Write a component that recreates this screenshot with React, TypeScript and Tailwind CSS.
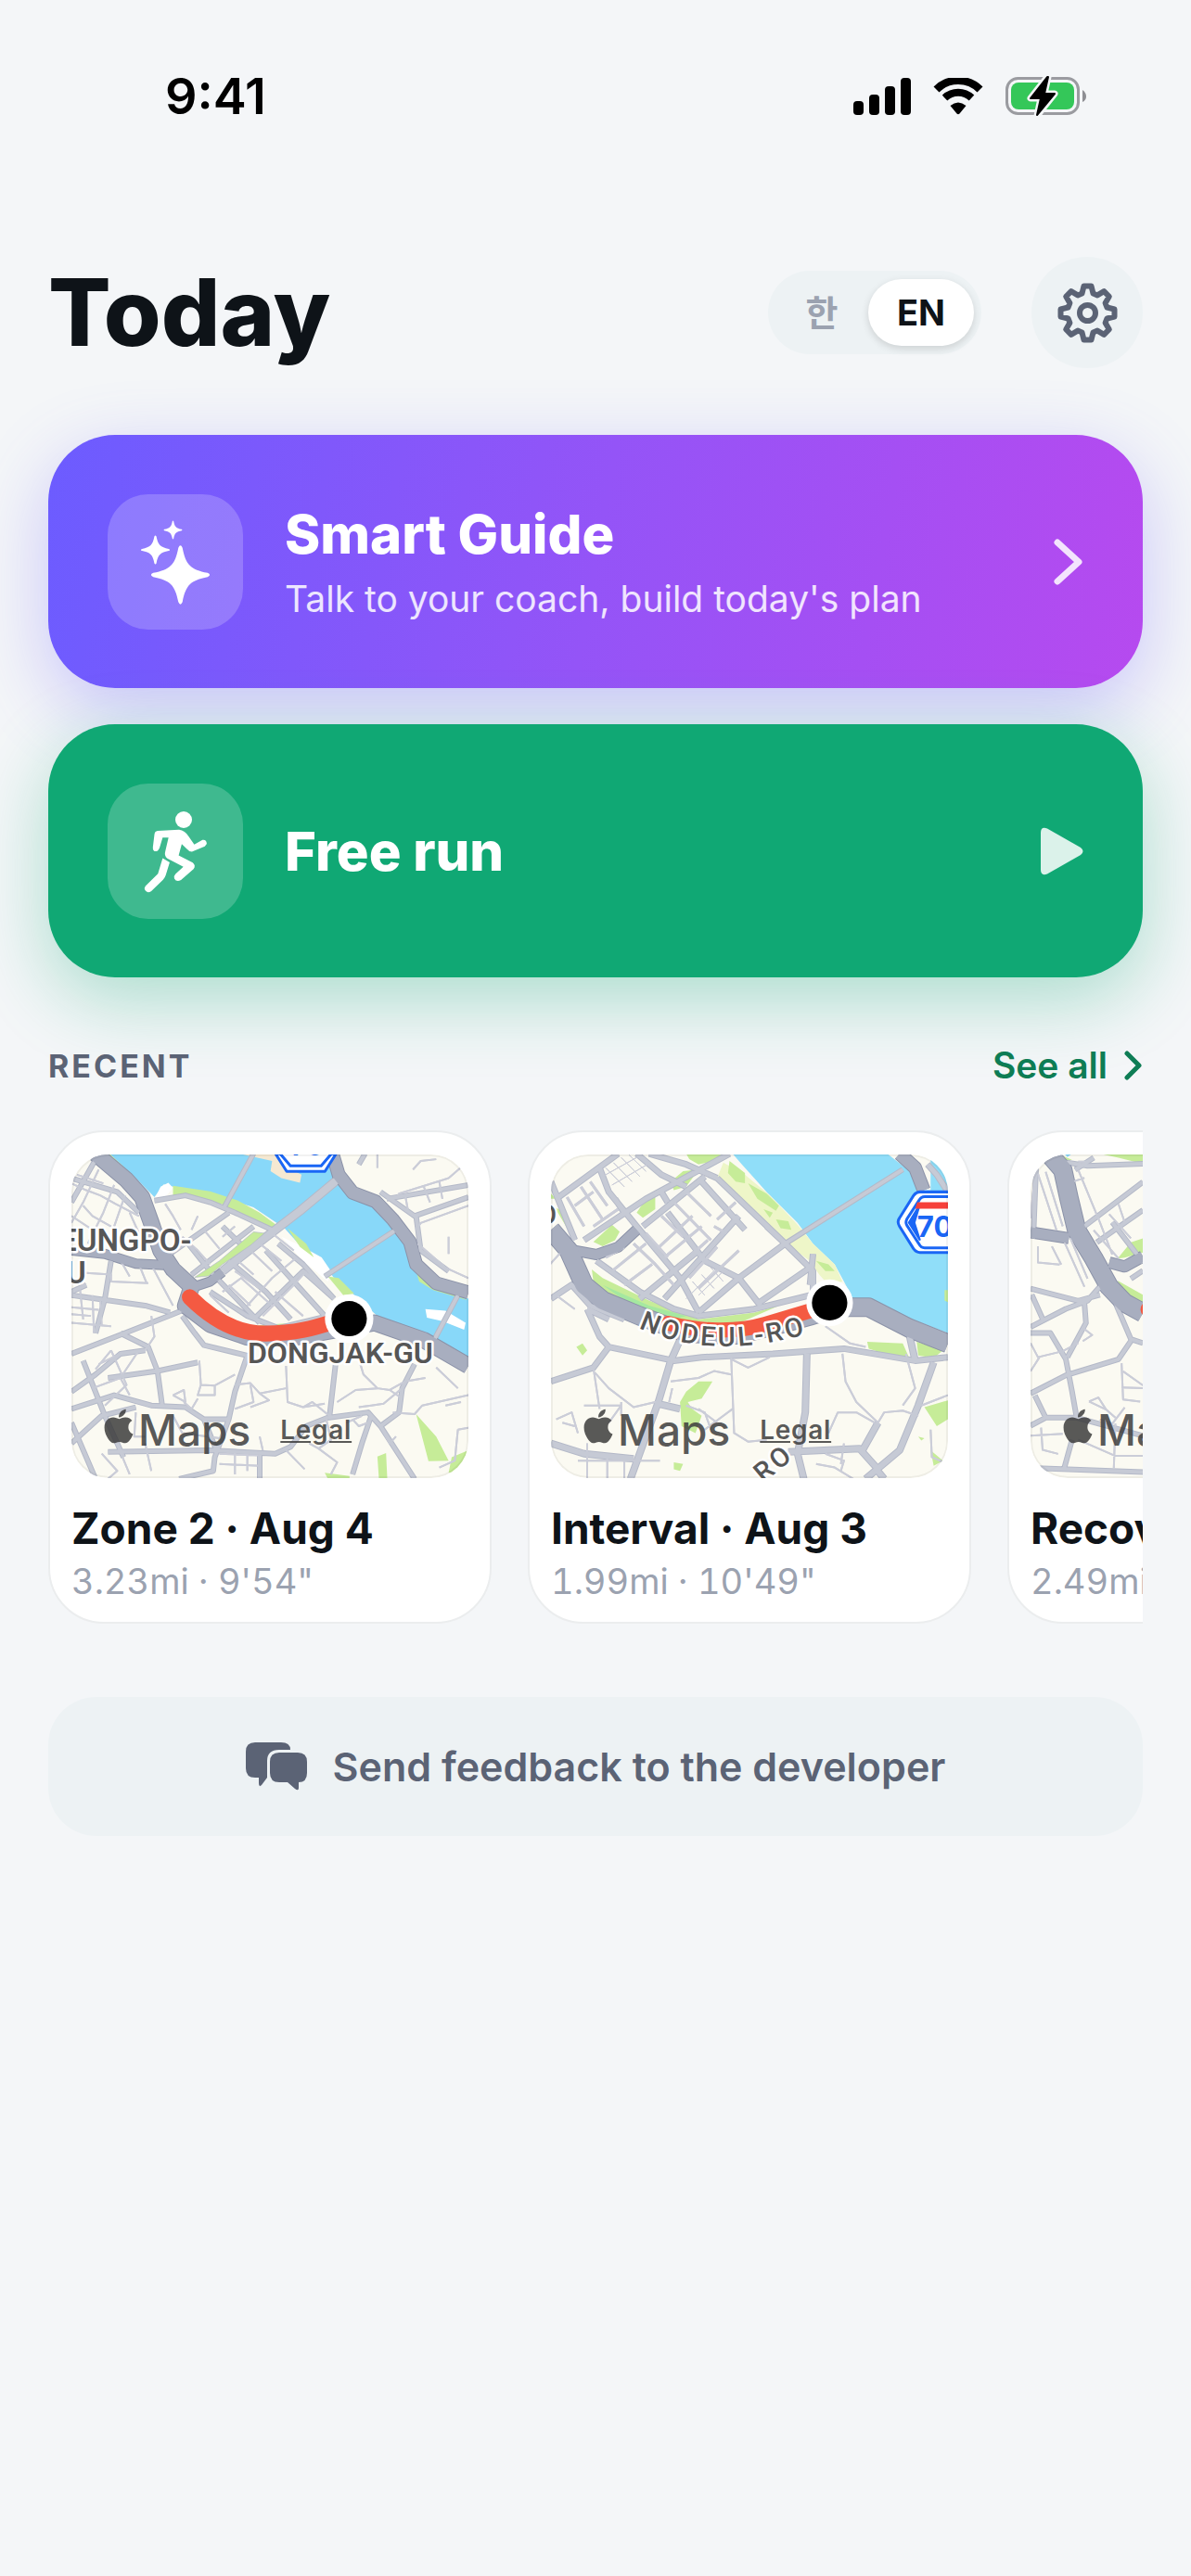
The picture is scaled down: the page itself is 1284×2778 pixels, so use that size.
import type { ReactNode } from "react"
import { FaApple } from "react-icons/fa"

const LAND = "#fbfaf2"
const WATER = "#88d8f9"
const GREEN = "#c6ec98"

type Road = { d: string; w: number; kind?: "minor" | "major" | "highway" }

const roadColor = { minor: "#cbcdd8", major: "#c6cad5", highway: "#a8aebf" }
const casingColor = { minor: "#cbcdd8", major: "#b4b9c8", highway: "#8b92a8" }

/* Gear outline: eight teeth around a 65px box */
const gearPath = (() => {
  const pts: string[] = []
  for (let i = 0; i < 8; i++) {
    const a = (i * Math.PI) / 4
    for (const [x, y] of [[-6, -21], [-4, -29], [4, -29], [6, -21]]) {
      const px = 32.5 + x * Math.cos(a) - y * Math.sin(a)
      const py = 32.5 + x * Math.sin(a) + y * Math.cos(a)
      pts.push(`${px.toFixed(1)} ${py.toFixed(1)}`)
    }
  }
  return `M${pts.join("L")}Z`
})()

const star =
  "M-.07-.93Q0-1.08.07-.93C.18-.35.35-.18.93-.07Q1.08 0 .93.07C.35.18.18.35.07.93Q0 1.08-.07.93C-.18.35-.35.18-.93.07Q-1.08 0-.93-.07C-.35-.18-.18-.35-.07-.93Z"

function Roads({ items }: { items: Road[] }) {
  return (
    <g fill="none" strokeLinejoin="round" strokeLinecap="butt">
      {items.map((r) => (
        <path key={"c" + r.d} d={r.d} stroke={casingColor[r.kind ?? "minor"]} strokeWidth={r.w + (r.kind ? 1 : 0)} vectorEffect="non-scaling-stroke" />
      ))}
      {items.map((r) => (
        <path key={r.d} d={r.d} stroke={roadColor[r.kind ?? "minor"]} strokeWidth={r.kind ? r.w - 1 : r.w} vectorEffect="non-scaling-stroke" />
      ))}
    </g>
  )
}

const label = {
  fontFamily: "Roboto, Inter, sans-serif",
  fontWeight: 600,
  fill: "#565656",
  stroke: "#ffffff",
  strokeWidth: 5,
  strokeLinejoin: "round",
  paintOrder: "stroke",
} as const

const zoneRoads: Road[] = [
  { w: 2, d: "M112 205L160 225L205 240L255 265L330 300M130 180L215 205M150 270L180 300L240 330M112 300L180 340M200 165L150 260L112 320M250 210L215 290L165 380M285 240L250 330M300 290L330 350" },
  { w: 2, d: "M160 465L240 470L240 490L360 495M265 420L300 475M330 440L355 495M375 450L440 560M112 490L160 500M140 515L150 600M180 530L185 640M205 540L210 620M112 565L200 572M112 610L240 620M112 585L175 590" },
  { w: 2, d: "M370 590L380 650L350 690L270 700L200 730M330 690L270 770L300 820M190 745L240 690M240 690L290 790L220 850M270 770L180 800M440 820L475 805L480 840L440 820M475 840L500 860L520 830M525 720L530 790L575 792L640 760M530 790L520 820L575 820L575 792M640 790L690 785L720 815L805 800M690 790L700 840L640 860M720 815L750 835L690 855" },
  { w: 2, d: "M805 735L810 840L860 855L890 840L945 880M860 855L930 845M1045 730L1055 760L1100 800L1140 805M970 840L1030 805L1100 800M1140 805L1190 780L1255 770M1140 805L1180 830M1040 855L1080 850L1120 845L1180 800M1150 870L1220 875L1245 850L1394 820M1320 850L1370 840M1290 740L1360 800M1110 910L1140 960L1160 940" },
  { w: 2, d: "M590 990L720 995M590 1020L720 1025M640 985L640 1050M680 990L680 1040M800 975L865 1035M935 890L950 950L910 975L880 960M910 975L970 1015L950 1050M1020 890L1040 910L1070 900M1000 900L1050 880M720 940L730 980M210 990L260 1040L230 1063M270 985L300 1050M350 960L370 1040M320 870L315 940L350 940M440 880L470 930L590 945M1360 920L1350 1010L1300 1030M1360 920L1394 915" },
  { w: 2, d: "M465 340L440 300L415 265M470 360L520 400L560 440M540 340L590 395M520 300L500 340M600 360L640 330M560 530L620 580M620 500L690 560M640 460L720 510M600 520L660 480L760 560M650 430L700 470M690 400L760 460M720 380L790 430M760 350L830 400M680 560L760 480L840 420M730 590L830 500L870 460M770 520L860 590" },
  { w: 2, d: "M1100 120L1100 160M1215 165L1240 140L1290 135M1160 250L1170 235L1330 190M1250 215L1270 260M1300 200L1310 250M1200 290L1190 240M1330 190L1394 140M1225 340L1240 320L1394 270M1230 380L1320 450L1394 480M1330 360L1330 410" },
  { w: 5, kind: "major", d: "M112 700L270 645L440 585L480 570M112 530L350 560L430 580M240 430L220 540L190 640M160 500L112 520M150 720L220 880L280 1000M112 810L190 760L270 700L350 690" },
  { w: 5, kind: "major", d: "M270 640L360 680L390 750L405 850M230 770L390 750L520 725M112 860L250 820L370 850L480 855L540 890L620 890M112 960L210 880L320 855M112 900L190 1063M470 590L510 640L540 675L680 705" },
  { w: 5, kind: "major", d: "M680 705L640 810L620 890L575 1000L570 1040L460 1063M230 985L560 980L770 990L820 970L870 910L940 885M965 730L945 885L1070 870L1110 910L1220 1063M1110 910L1170 870L1180 800L1220 730M1080 880L1050 960L1020 1050M540 890L580 980M720 990L720 1063" },
  { w: 5, kind: "major", d: "M380 255L480 240L560 260L640 290L760 340M430 410L620 290M500 470L700 330M480 370L560 460L720 610M600 330L680 400M620 430L740 520L820 600M740 400L860 520L940 600M700 600L860 460L960 540M780 380L860 440L960 540M560 520L680 590L780 625L940 590" },
  { w: 5, kind: "major", d: "M200 120L112 260M112 190L260 230L330 290M1110 230L1220 300L1394 245M1130 250L1394 210M1225 300L1240 400L1330 460M1040 150L1060 119" },
  { w: 5, kind: "major", d: "M605 275L700 119M930 475L1160 340M1280 665L1360 530" },
  { w: 9, kind: "major", d: "M600 460L720 375L850 285L970 195" },
  { w: 10, kind: "highway", d: "M112 400L220 410L320 438L410 442M510 505L560 490L600 462" },
  { w: 14, kind: "highway", d: "M955 119L975 180L1020 232L1095 258L1150 310L1205 375L1225 440L1290 495L1394 522" },
  { w: 17, kind: "highway", d: "M190 119L290 195L340 245L370 320L400 400L440 455L500 505L480 560L560 615L680 652L820 655L940 635L1090 610L1250 660L1394 735" },
]

function ZoneMap() {
  return (
    <>
      <g transform="scale(.3323 .3697) translate(-112 -119)">
        <path fill={WATER} d="M235 119L320 190L380 245L410 208L440 215L600 245L700 275L800 335L850 385L920 430L960 480L1020 525L1100 590L1394 715V540L1290 510L1230 460L1200 400L1180 340L1120 280L1030 250L980 190L955 119Z" />
        <path fill="#fff" d="M378 255L400 215L425 203L440 218L420 240ZM850 385L920 420L950 460L940 490L860 430L790 360Z" />
        <path fill="#f5e9d2" d="M655 119H770L800 155L855 180L850 203L790 190L755 170L760 140Z" />
        <path fill="#fff" d="M1255 570L1320 575L1385 610L1380 630L1310 605L1260 595Z" />
        <path fill={GREEN} d="M215 119H235L315 185V200ZM440 212L560 228L650 255L720 290L780 330L750 338L620 285L600 266L440 240ZM810 335L870 380L895 420L850 390ZM940 475L975 480L1025 525L990 530ZM1225 460L1270 490L1330 520L1394 545L1280 515L1235 490ZM1225 875L1290 940L1330 1010L1265 1012ZM1100 998L1128 988L1132 1063H1105ZM930 1045L1010 1055V1063H940ZM1394 980L1340 1000L1330 1045L1394 1040ZM560 570L680 620L860 608L680 632Z" />
        <Roads items={zoneRoads} />
        <path fill={GREEN} stroke="#b4b9c8" strokeWidth="2" d="M510 478L555 474L600 440L690 385L735 350L700 346L590 430Z" />
      </g>
      <path d="M219 0L231 19H272L284 0Z" fill="#fff" stroke="#1a66f5" strokeWidth="3" strokeLinejoin="round" />
      <path d="M224 0L235 13H268L279 0" fill="#fff" stroke="#1a66f5" strokeWidth="3" />
      <text x="236" y="2" fontSize="28" fontWeight="700" fill="#1a66f5" fontFamily="Inter, sans-serif">70</text>
      <path d="M127 154C147 174 175 193 208 193S260 187 282 180" fill="none" stroke="#f45a42" strokeWidth="17" strokeLinecap="round" />
      <circle cx="298" cy="177" r="26" fill="#fff" />
      <circle cx="298" cy="177" r="19" />
      <text {...label} x="-13" y="104" fontSize="33">EUNGPO-</text>
      <text {...label} x="-6" y="139" fontSize="33">U</text>
      <text {...label} x="189" y="225" fontSize="32">DONGJAK-GU</text>
    </>
  )
}

const intervalRoads: Road[] = [
  { w: 1, d: "M340 160L400 215M365 145L425 200M390 130L450 185M415 122L470 170M330 185L450 125M360 210L475 150M600 540L700 450M640 530L720 460M620 490L660 530M650 470L690 510M680 450L720 490" },
  { w: 3, d: "M215 245L270 330M260 215L330 310M290 200L345 270M240 270L300 230M300 330L380 280M340 420L400 390M360 460L470 380M400 500L490 440M430 380L500 440L560 500M470 350L540 420M520 300L590 360M560 260L680 370M600 230L680 300M500 400L620 300M530 420L650 330M570 450L670 370M610 480L700 390M640 510L770 400M700 310L760 260M690 330L730 350" },
  { w: 2, d: "M200 400L160 440M180 530L240 570M300 740L320 860M305 755L350 800L430 855L510 838M270 850L390 850L350 900M180 890L230 870L250 930M200 900L240 910M390 840L390 880M550 780L640 770L690 750L745 760M555 800L545 840M600 850L660 870L680 920M660 920L750 860M640 860L700 900" },
  { w: 2, d: "M745 700L755 930L800 955L860 950M745 715L800 740L870 710M1105 700L1115 780L1150 840L1220 900L1240 870L1300 865L1350 880M1060 930L1090 870L1150 870L1210 900M1050 620L1130 670L1180 680M1310 700L1340 800L1300 850M1390 920L1394 1000L1446 1020M1020 1020L1080 1030L1140 1063M1050 990L1110 1010L1100 1040M1110 960L1100 1020M1360 850L1446 820M280 960L280 1063M345 1000V1063M400 1000V1063M250 1010L515 1010" },
  { w: 6, kind: "major", d: "M163 200L240 370M180 250L380 119M270 370L470 250L740 119M320 160L350 230L440 330L580 480L640 580M440 119L520 180L600 215M480 119L600 150L700 190M370 250L400 290M460 330L660 185M520 230L540 260M540 290L660 430L770 480M640 190L700 250L790 340M700 190L920 380L1010 460L1010 520M530 540L770 300M640 580L770 480L920 380M830 555L1000 450M770 480L840 560M920 380L860 330" },
  { w: 6, kind: "major", d: "M310 430L450 520L560 570L640 590L820 570L1000 530M1010 410L1000 500M450 540L640 400M280 570L320 650L350 680L560 720L650 710L880 700L1110 685L1340 720L1446 710M350 680L300 740L163 780M350 600L280 570" },
  { w: 7, kind: "major", d: "M590 640L550 720L510 840L420 1063M990 700L985 870L960 990L980 1063M510 845L580 860M1400 725L1350 850L1290 980L1180 1063M1210 1030L1240 1063M930 985L1160 975L1215 1030M163 960L270 990L430 1005M1220 900L1170 980M1320 640L1340 720" },
  { w: 5, kind: "major", d: "M920 380L1300 165" },
  { w: 6, kind: "major", d: "M163 540L230 500L290 560L400 600M1380 150L1410 180L1446 230" },
  { w: 11, kind: "highway", d: "M240 400L310 412L380 390L440 340" },
  { w: 14, kind: "highway", d: "M1290 119L1340 160L1368 225" },
  { w: 20, kind: "highway", d: "M163 340L220 400L270 500L330 545L450 590L600 640L760 645L880 620L1000 590L1090 565L1190 565L1320 625L1446 670" },
]

function IntervalMap() {
  return (
    <>
      <g transform="scale(.332 .3697) translate(-163 -119)">
        <path fill="#90def9" d="M750 119L780 150L860 230L960 320L1010 380L1080 440L1110 490L1150 560L1190 550L1446 640V119H1390L1390 225H1345L1330 175L1250 119Z" />
        <path fill="#eef6c8" d="M720 145L790 180L870 240L960 325L1010 380L1080 440L1105 490L1060 500L1030 470L1000 430L930 385L830 290L700 190Z" />
        <path fill={GREEN} d="M163 235L180 250L163 250ZM175 275L200 285L245 360L215 335ZM600 119H715L690 140L640 150L610 135ZM740 140L790 175L790 205L760 200L735 175ZM800 205L860 235L900 270L890 285L830 250ZM890 310L930 315L940 340L905 335ZM850 280L880 290L870 305ZM300 375L360 325L385 345L370 370L330 388ZM440 290L470 250L500 245L500 280L460 305ZM550 200L590 170L640 165L600 215L560 225ZM295 455L330 480L480 545L640 600L820 580L900 560L760 615L620 605L480 590L340 530L300 490ZM1020 430L1060 440L1080 460L1050 460ZM1185 665L1300 670L1320 710L1260 705L1190 685ZM1345 665L1430 690L1400 712L1350 705ZM600 810L640 780L685 780L650 830L605 840L620 860L650 880L630 930L585 910L580 840ZM245 680L265 670L280 690L265 705ZM1370 855L1446 835V890L1410 910ZM1390 980L1430 1010L1400 1025ZM560 1015L590 1020L580 1040L560 1035ZM1350 940L1370 945L1360 952ZM1435 515H1446V550L1435 545Z" />
        <path fill="#a5e8a0" d="M330 500L480 560L600 590L560 600L440 570Z" />
        <Roads items={intervalRoads} />
      </g>
      <path d="M440 41H396Q392 41 389 45L374 69Q371 73 374 78L389 102Q392 106 396 106H440Z" fill="#fff" stroke="#1a66f5" strokeWidth="3" />
      <path d="M440 46H401Q397 46 395 50L382 70Q380 74 382 77L395 97Q397 101 401 101H440" fill="#fff" stroke="#1a66f5" strokeWidth="3" />
      <path d="M396 54L384 74L396 93L390 74Z" fill="#1a66f5" stroke="#1a66f5" strokeWidth="2" />
      <path d="M393 52H430V59H391Z" fill="#f6403a" />
      <text x="393" y="89" fontSize="31" fontWeight="700" fill="#1a66f5" fontFamily="Inter, sans-serif">70</text>
      <path d="M126 182C160 191 200 192 230 183L280 168" fill="none" stroke="#f45a42" strokeWidth="16" strokeLinecap="round" />
      <circle cx="299" cy="160" r="25" fill="#fff" />
      <circle cx="299" cy="160" r="19" />
      <path id="nodeul-ro" d="M94 187Q178 226 292 188" fill="none" />
      <text {...label} fontSize="29" fontWeight={500} letterSpacing="3">
        <textPath href="#nodeul-ro">NODEUL-RO</textPath>
      </text>
      <text {...label} fontSize="29" fontWeight={500} letterSpacing="3" transform="translate(228 354) rotate(-40)">RO</text>
      <text {...label} fontSize="29" fontWeight={500} x="-14" y="75">O</text>
    </>
  )
}

const recoveryRoads: Road[] = [
  { w: 2, d: "M216 490L230 380L250 350M240 380L300 520M265 375L320 510M240 560V600L310 605M285 560L315 605M320 540L390 660M345 540L400 640M370 370L440 500L480 580M390 390L350 400M370 350L400 350" },
  { w: 2, d: "M216 800L240 835L320 820L370 800M216 870L245 835M390 765L415 780L385 795M510 850L515 940L570 945M515 870L579 905M510 910L579 912M405 945L435 935L460 965L405 945M460 965L490 985M440 990L480 1000L520 960M250 1010L255 1065L305 1075M216 1030L320 1025M370 1040L490 1080L579 1080M490 1000L485 1110M470 480L540 540M500 455L520 500M420 520L500 590" },
  { w: 5, kind: "major", d: "M216 665L370 695L440 680M216 760L330 715L400 695L440 660L490 700L540 790L579 800M220 680L255 740M216 775L280 775L330 840L350 920L365 985M335 835L395 750L390 700M216 925L330 880L500 840L540 795M230 930L265 985M216 1005L265 985L365 985M365 985L579 1030M350 1040L325 1110M216 1110L579 1120M320 350L400 360L579 355" },
  { w: 5, kind: "major", d: "M390 510L579 400M430 550L579 470M480 500L560 580L579 600M360 370L420 340M235 345L225 540M540 640L579 620" },
  { w: 12, kind: "highway", d: "M216 525L340 540M470 600L520 610L579 585" },
  { w: 20, kind: "highway", d: "M275 330L320 370L340 440L365 520L420 590L470 660L520 700L579 725" },
]

function RecoveryMap() {
  return (
    <>
      <g transform="scale(.3323 .4325) translate(-216 -330)">
        <path fill={GREEN} d="M440 330H579V355L500 340ZM345 400L355 400V420ZM497 590L540 550L579 540V575L520 588ZM497 645L579 680V705L510 665ZM318 335L350 345L330 348Z" />
        <path fill={WATER} d="M325 330H350L335 338Z" />
        <Roads items={recoveryRoads} />
      </g>
      <path d="M126 167C150 187 180 193 210 193" fill="none" stroke="#f45a42" strokeWidth="16" strokeLinecap="round" />
    </>
  )
}

const runs: { title: string; stats: string; map: ReactNode }[] = [
  { title: "Zone 2 · Aug 4", stats: "3.23mi · 9'54\"", map: <ZoneMap /> },
  { title: "Interval · Aug 3", stats: "1.99mi · 10'49\"", map: <IntervalMap /> },
  { title: "Recovery", stats: "2.49mi", map: <RecoveryMap /> },
]

function StatusBar() {
  return (
    <div className="flex h-[207px] items-center justify-between pl-[178px] pr-[112px]">
      <span className="text-[54px] font-semibold text-black">9:41</span>
      <div className="flex items-center gap-6">
        <svg className="h-[40px] w-[62px]" viewBox="0 0 62 40">
          <rect x="0" y="25" width="11" height="15" rx="4" />
          <rect x="17" y="18" width="11" height="22" rx="4" />
          <rect x="34" y="9" width="11" height="31" rx="4" />
          <rect x="51" y="0" width="11" height="40" rx="4" />
        </svg>
        <svg className="h-[40px] w-[54px]" viewBox="0 0 54 40">
          <path d="M3.500 12.500A33.500 33.500 0 0 1 50.500 12.500" fill="none" stroke="#000" strokeWidth="8.500" />
          <path d="M12.500 21.500A21 21 0 0 1 41.500 21.500" fill="none" stroke="#000" strokeWidth="8" />
          <path d="M18.500 30Q27 23 35.500 30L28.500 38.500Q27 40 25.500 38.500Z" />
        </svg>
        <svg className="h-[44px] w-[88px]" viewBox="0 0 88 44">
          <rect x="1.500" y="2.500" width="77" height="38" rx="12" fill="none" stroke="#9a9ba0" strokeWidth="3" />
          <path d="M83 15Q87 18 87 22T83 28Z" fill="#8e8f94" />
          <rect x="6" y="7" width="68" height="29" rx="8" fill="#34c759" />
          <path d="M45 1L27 24H38L34 43L53 19H42L46 1Z" stroke="#f4f6f8" strokeWidth="7" strokeLinejoin="round" />
          <path d="M45 1L27 24H38L34 42L53 19H42L46 1Z" stroke="#000" strokeWidth="2" strokeLinejoin="round" />
        </svg>
      </div>
    </div>
  )
}

function Header() {
  return (
    <header className="flex h-[120px] items-center justify-between">
      <h1 className="text-[100px] font-extrabold leading-none text-[#0e1318]">Today</h1>
      <div className="flex items-center gap-[54px]">
        <div className="flex h-[90px] items-center rounded-full bg-[#edf2f4] p-2">
          <button className="h-[72px] w-[100px] rounded-full text-[38px] font-bold text-[#9ba2b0]">한</button>
          <button className="h-[72px] w-[114px] rounded-full bg-white text-[38px] font-bold text-[#0e1318] shadow-[0_3px_9px_rgba(0,0,0,0.14)]">EN</button>
        </div>
        <button aria-label="Settings" className="flex size-[120px] items-center justify-center rounded-full bg-[#edf2f4]">
          <svg className="size-[65px]" viewBox="0 0 65 65" fill="none" stroke="#5b6375" strokeWidth="6" strokeLinejoin="round">
            <path d={gearPath} />
            <circle cx="32.500" cy="32.500" r="8.500" />
          </svg>
        </button>
      </div>
    </header>
  )
}

function RunCard({ title, stats, map }: { title: string; stats: string; map: ReactNode }) {
  return (
    <article className="w-[478px] shrink-0 rounded-[60px] border-2 border-[#ebedee] bg-white px-[23px] pb-5 pt-6">
      <div className="relative h-[349px] overflow-hidden rounded-[40px]">
        <svg className="size-full" viewBox="0 0 426 349" preserveAspectRatio="xMidYMid slice">
          <rect width="426" height="349" fill={LAND} />
          {map}
        </svg>
        <div className="absolute inset-0 rounded-[40px] border-2 border-black/5" />
        <div className="absolute bottom-6 left-[34px] flex items-center text-[#3c3c3c]/85">
          <FaApple className="mr-1 h-[42px] w-[34px] -translate-y-1" />
          <span className="text-[46px] font-medium leading-[56px]">Maps</span>
          <a href="#legal" className="ml-8 text-[28px] font-semibold leading-[56px] tracking-wide underline">Legal</a>
        </div>
      </div>
      <h3 className="mt-[26px] whitespace-nowrap text-[46px] font-bold leading-[56px] text-[#0e1318]">{title}</h3>
      <p className="mt-[5px] whitespace-nowrap text-[38px] leading-[48px] tabular-nums text-[#9ba2b0]">{stats}</p>
    </article>
  )
}

export default function App() {
  return (
    <div className="min-h-screen overflow-hidden bg-[#f4f6f8] font-[Inter,'Noto_Sans_CJK_KR',sans-serif]">
      <StatusBar />
      <main className="px-[52px] pt-[70px]">
        <Header />

        {/* Start actions */}
        <div className="mt-[72px] flex flex-col gap-[39px]">
          <button className="flex h-[273px] items-center rounded-[72px] bg-linear-[100deg,#6c5cff,#9454f7_50%,#b64aef] px-16 text-left text-white shadow-[0_24px_80px_rgba(108,92,255,0.32)]">
            <svg className="size-[146px] rounded-[44px] bg-white/20" viewBox="0 0 146 146" fill="#fff">
              <path d={star} transform="translate(78.500 87) scale(31.500)" />
              <path d={star} transform="translate(51.500 60) scale(15.500)" />
              <path d={star} transform="translate(70.500 38.500) scale(10)" />
            </svg>
            <span className="ml-[45px] flex flex-1 flex-col gap-2">
              <span className="text-[58px] font-extrabold leading-[72px]">Smart Guide</span>
              <span className="text-[39px] leading-[52px] text-white/85">Talk to your coach, build today's plan</span>
            </span>
            <svg className="h-[50px] w-[32px]" viewBox="0 0 32 50" fill="none" stroke="#fff" strokeOpacity=".85" strokeWidth="7" strokeLinecap="round" strokeLinejoin="round">
              <path d="M4 4L27 25L4 46" />
            </svg>
          </button>

          <button className="flex h-[273px] items-center rounded-[72px] bg-[#10a874] px-16 text-left text-white shadow-[0_24px_80px_rgba(16,168,116,0.32)]">
            <svg className="size-[146px] rounded-[44px] bg-white/20" viewBox="0 0 146 146" fill="#fff">
              <circle cx="82" cy="39" r="9" />
              <g transform="scale(.4209 .4082) translate(-202 -990)">
                <path d="M330 1115L385 1112Q400 1114 410 1130L424 1151L445 1139Q455 1137 456 1149L451 1156L418 1170Q410 1170 405 1163L392 1150L384 1180L420 1199Q429 1207 422 1216L390 1245Q378 1251 373 1241Q371 1234 376 1229L396 1210L355 1188Q346 1180 350 1168L358 1133L343 1133L335 1160Q330 1172 321 1168Q317 1164 318 1158L322 1124Q323 1116 330 1115Z" />
                <path d="M343 1187L361 1198L351 1232Q349 1239 344 1244L314 1274Q304 1281 298 1272Q295 1266 299 1261L331 1228Z" />
              </g>
            </svg>
            <span className="ml-[45px] flex-1 text-[58px] font-extrabold leading-[72px]">Free run</span>
            <svg className="h-[52px] w-[46px]" viewBox="0 0 46 52" fill="#fff" fillOpacity=".85">
              <path d="M0 6Q0 -1 7 1.500L43 22Q48 26 43 30L7 50.500Q0 53 0 46Z" />
            </svg>
          </button>
        </div>

        {/* Recent runs */}
        <section>
          <div className="mt-[75px] flex h-10 items-center justify-between">
            <h2 className="text-[34px] font-bold tracking-[3px] text-[#5b6375]">RECENT</h2>
            <a href="#runs" className="flex items-center gap-[18px] text-[39px] font-semibold text-[#0e7d55]">
              See all
              <svg className="h-[32px] w-[20px]" viewBox="0 0 20 32" fill="none" stroke="currentColor" strokeWidth="5" strokeLinecap="round" strokeLinejoin="round">
                <path d="M3 3L16 16L3 29" />
              </svg>
            </a>
          </div>
          <div className="mt-[50px] flex gap-[39px] overflow-hidden">
            {runs.map((run) => (
              <RunCard key={run.title} {...run} />
            ))}
          </div>
        </section>

        <button className="mt-[79px] flex h-[150px] w-full items-center justify-center gap-7 rounded-[52px] bg-[#edf2f4] text-[43px] font-semibold text-[#5b6375]">
          <svg className="h-[52px] w-[66px]" viewBox="0 0 66 52" fill="#5b6375">
            <path d="M10 0H38Q48 0 48 8H36Q23 8 23 20V38L17 46Q14 49 14 44V38H10Q0 38 0 28V10Q0 0 10 0Z" />
            <path d="M36 11H56Q66 11 66 21V33Q66 43 57 43V49Q57 53 53 50L45 43H36Q26 43 26 33V21Q26 11 36 11Z" />
          </svg>
          Send feedback to the developer
        </button>
      </main>
    </div>
  )
}
